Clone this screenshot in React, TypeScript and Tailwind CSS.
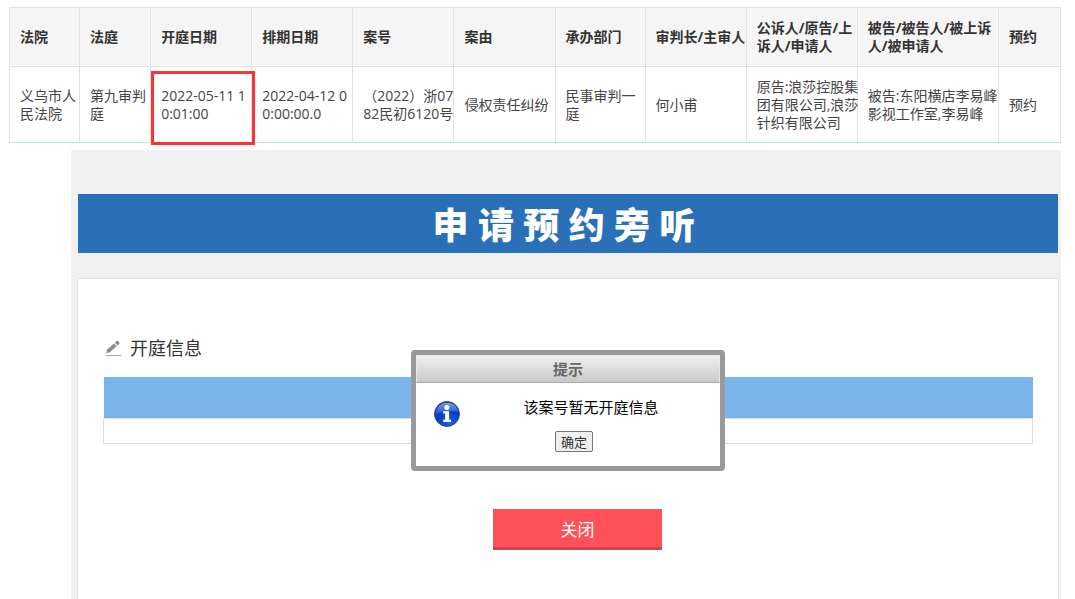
import React, { useState } from 'react';

type Column = {
    title: string[];
    value: string[];
    width: string;
    marked?: boolean;
};

const columns: Column[] = [
    { title: ['法院'], value: ['义乌市人', '民法院'], width: 'w-[70px]' },
    { title: ['法庭'], value: ['第九审判', '庭'], width: 'w-[71px]' },
    { title: ['开庭日期'], value: ['2022-05-11 1', '0:01:00'], width: 'w-[101px]', marked: true },
    { title: ['排期日期'], value: ['2022-04-12 0', '0:00:00.0'], width: 'w-[101px]' },
    { title: ['案号'], value: ['（2022）浙07', '82民初6120号'], width: 'w-[101px]' },
    { title: ['案由'], value: ['侵权责任纠纷'], width: 'w-[101px]' },
    { title: ['承办部门'], value: ['民事审判一', '庭'], width: 'w-[90px]' },
    { title: ['审判长/主审人'], value: ['何小甫'], width: 'w-[101px]' },
    { title: ['公诉人/原告/上', '诉人/申请人'], value: ['原告:浪莎控股集', '团有限公司,浪莎', '针织有限公司'], width: 'w-[111px]' },
    { title: ['被告/被告人/被上诉', '人/被申请人'], value: ['被告:东阳横店李易峰', '影视工作室,李易峰'], width: 'w-[141px]' },
    { title: ['预约'], value: ['预约'], width: 'w-[62px]' },
];

const Lines = ({ items }: { items: string[] }) => (
    <>
        {items.map((line) => (
            <span key={line} className="block">{line}</span>
        ))}
    </>
);

const CourtTable = () => (
    <table className="w-full table-fixed border-collapse text-left text-sm leading-[18px] whitespace-nowrap">
        <thead>
            <tr className="h-[59px] bg-[#f5f5f5] text-[#333]">
                {columns.map((c) => (
                    <th key={c.title[0]} className={`${c.width} border border-[#e2e2e2] pl-[10px] font-bold shadow-[inset_0_-1px_0_#fff]`}>
                        <Lines items={c.title} />
                    </th>
                ))}
            </tr>
        </thead>
        <tbody>
            <tr className="h-[76px] text-[#444]">
                {columns.map((c) => (
                    <td key={c.title[0]} className="relative border border-[#e2e2e2] border-b-[#bfe3cf] pl-[10px]">
                        <Lines items={c.value} />
                        {c.marked && (
                            <span className="pointer-events-none absolute -right-1 -bottom-[3px] left-0 top-1 z-10 border-[3px] border-[#fb3236]" />
                        )}
                    </td>
                ))}
            </tr>
        </tbody>
    </table>
);

const PencilIcon = () => (
    <svg width="17" height="17" viewBox="0 0 17 17" fill="#8c8c8c" aria-hidden="true">
        <path d="M1.2 13.2 2.2 9.6 9 3.4 11.6 6.2 4.8 12.3z" />
        <path d="M9.8 2.6 11.6 1q.8-.6 1.5.1l1.2 1.3q.6.8-.1 1.5L12.4 5.5z" />
        <path d="M.5 15h16v1H.5z" fill="#aaa" />
    </svg>
);

const InfoIcon = () => (
    <svg width="26" height="26" viewBox="0 0 26 26" aria-hidden="true">
        <defs>
            <radialGradient id="info-ball" cx=".6" cy=".85" r=".85">
                <stop offset="0" stopColor="#1c62e6" />
                <stop offset=".55" stopColor="#0b3fc4" />
                <stop offset="1" stopColor="#1238a0" />
            </radialGradient>
            <linearGradient id="info-shine" x1="0" y1="0" x2="0" y2="1">
                <stop offset="0" stopColor="#a9c6ff" stopOpacity=".75" />
                <stop offset="1" stopColor="#4b82ee" stopOpacity=".35" />
            </linearGradient>
        </defs>
        <circle cx="13" cy="13" r="12.4" fill="url(#info-ball)" stroke="#1c3f96" />
        <path d="M1.7 13.5C1.5 6.5 6.5 1.7 13 1.7s10.5 4 11.2 8.8C17 9 9 10.5 1.7 13.5z" fill="url(#info-shine)" />
        <circle cx="12.8" cy="6.5" r="2.5" fill="#fff" />
        <path d="M9.2 10.2h5.9v8.6H17v2.2H9.2v-2.2h1.9v-6.4H9.2z" fill="#fff" />
    </svg>
);

const NoticeDialog = ({ onClose }: { onClose: () => void }) => (
    <div
        role="dialog"
        aria-labelledby="notice-title"
        className="absolute top-[71px] left-1/2 w-[314px] -translate-x-1/2 rounded-[4px] border-[5px] border-[#999] bg-white"
    >
        <h3
            id="notice-title"
            className="border border-[#e8e8e8] border-b-[#aaa] bg-linear-to-b from-[#f0f0f0] to-[#c9c9c9] text-center text-[15px] leading-[26px] font-bold text-[#666]"
        >
            提示
        </h3>
        <div className="flex pt-[14px] pl-[18px]">
            <div className="pt-1">
                <InfoIcon />
            </div>
            <div className="flex grow flex-col items-center pr-[4px] pb-[14px]">
                <p className="pl-[6px] text-[15px] leading-5 text-black">该案号暂无开庭信息</p>
                <button
                    type="button"
                    onClick={onClose}
                    className="mt-[14px] mr-[28px] h-[21px] w-[38px] rounded-[2px] border border-[#767676] bg-[#efefef] text-[13px] leading-[18px] text-[#333]"
                >
                    确定
                </button>
            </div>
        </div>
    </div>
);

export default function App() {
    const [noticeOpen, setNoticeOpen] = useState(true);

    return (
        <div className="flex min-h-screen flex-col bg-white pt-[7px] pr-[14px] pl-[9px] font-['Open_Sans','Noto_Sans_CJK_SC',sans-serif]">
            <CourtTable />

            <main className="mt-[7px] ml-[62px] flex grow flex-col bg-[#f1f1f1] px-[6px] pt-11 pr-[2px]">
                <h1 className="mx-px bg-[#2970b8] pt-1 pr-2 text-center text-4xl leading-[55px] font-black text-white">
                    申 请 预 约 旁 听
                </h1>

                <section className="relative mt-[25px] grow border border-b-0 border-[#e2e2e2] bg-white px-[25px] pt-[56px]">
                    <h2 className="flex items-center gap-2 pl-[2px] text-lg leading-[26px] text-[#333]">
                        <PencilIcon />
                        开庭信息
                    </h2>

                    <table className="mt-4 w-full border-collapse">
                        <thead>
                            <tr>
                                <th className="h-[41px] bg-[#79b4eb]" />
                            </tr>
                        </thead>
                        <tbody>
                            <tr>
                                <td className="h-[25px] border border-[#ddd]" />
                            </tr>
                        </tbody>
                    </table>

                    <div className="flex justify-center pt-[65px] pb-[49px] pl-[19px]">
                        <button
                            type="button"
                            className="h-[41px] w-[169px] border-b-[3px] border-[#cc4449] bg-[#ff5157] pt-1 text-[17px] leading-[34px] text-white"
                        >
                            关闭
                        </button>
                    </div>

                    {noticeOpen && <NoticeDialog onClose={() => setNoticeOpen(false)} />}
                </section>
            </main>
        </div>
    );
}
